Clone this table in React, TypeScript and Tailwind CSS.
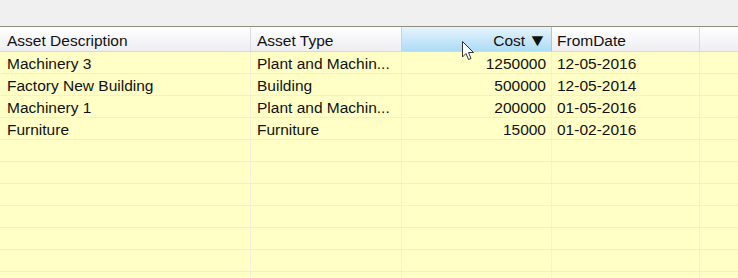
import React from "react";

const rows = [
  ["Machinery 3", "Plant and Machin...", "1250000", "12-05-2016"],
  ["Factory New Building", "Building", "500000", "12-05-2014"],
  ["Machinery 1", "Plant and Machin...", "200000", "01-05-2016"],
  ["Furniture", "Furniture", "15000", "01-02-2016"],
  ["", "", "", ""],
  ["", "", "", ""],
  ["", "", "", ""],
  ["", "", "", ""],
  ["", "", "", ""],
  ["", "", "", ""],
  ["", "", "", ""],
];

export default function App() {
  return (
    <div
      className="relative w-[738px] h-[278px] overflow-hidden bg-[#f0f0f0] flex flex-col text-[15.5px] text-[#111]"
      style={{ fontFamily: '"Liberation Sans", Arial, sans-serif' }}
    >
      <div className="h-[26px] shrink-0 bg-[#f0f0f0]" />
      <div className="h-px shrink-0 bg-[#8f8f7f]" />
      <div className="h-[25px] shrink-0 flex border-b border-[#d8d8d8] bg-gradient-to-b from-[#ffffff] to-[#eeeef2]">
        <div className="w-[251px] shrink-0 border-r border-[#dcdce0] pl-[7px] pt-[3px] flex items-center leading-none">Asset Description</div>
        <div className="w-[151px] shrink-0 border-r border-[#b8d8ee] pl-[6px] pt-[3px] flex items-center leading-none">Asset Type</div>
        <div className="w-[150px] shrink-0 border-r border-[#9ccbe8] bg-gradient-to-b from-[#e6f4fc] to-[#acdcf6] pr-[5px] pt-[3px] flex items-center justify-end leading-none">
          Cost <span className="ml-[4px] text-[17px] scale-x-[1.15]">▼</span>
        </div>
        <div className="w-[148px] shrink-0 border-r border-[#dcdce0] pl-[5px] pt-[3px] flex items-center leading-none">FromDate</div>
        <div className="flex-1" />
      </div>
      <div className="flex-1 bg-[#ffffc6] flex flex-col">
        {rows.map((r, i) => (
          <div key={i} className="h-[22px] shrink-0 flex border-b border-[#f0f0d6]">
            <div className="w-[251px] shrink-0 border-r border-[#f2f2da] pl-[7px] pt-[2px] flex items-center leading-none">{r[0]}</div>
            <div className="w-[151px] shrink-0 border-r border-[#f2f2da] pl-[6px] pt-[2px] flex items-center leading-none">{r[1]}</div>
            <div className="w-[150px] shrink-0 border-r border-[#f2f2da] pr-[5px] pt-[2px] flex items-center justify-end leading-none">{r[2]}</div>
            <div className="w-[148px] shrink-0 border-r border-[#f2f2da] pl-[5px] pt-[2px] flex items-center leading-none">{r[3]}</div>
            <div className="flex-1" />
          </div>
        ))}
      </div>
      <svg className="absolute left-[462px] top-[41px]" width="14" height="22" viewBox="0 0 14 22">
        <path d="M0.5 0.5 L0.5 16 L4 12.5 L6.5 18.5 L9 17.5 L6.5 11.5 L11.5 11.5 Z" fill="#ffffff" stroke="#333" strokeWidth="1" strokeLinejoin="round" />
      </svg>
    </div>
  );
}
